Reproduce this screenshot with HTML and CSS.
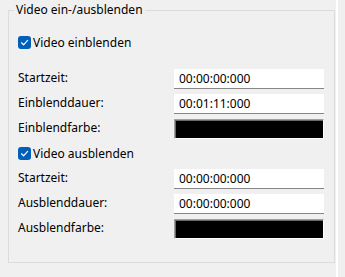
FILE: index.html
```html
<!DOCTYPE html>
<html lang="de">
<head>
    <meta charset="UTF-8">
    <title>Video ein-/ausblenden</title>
    <link rel="stylesheet" href="styles.css">
</head>
<body>
    <div class="pane">
        <fieldset class="group">
            <legend>Video ein-/ausblenden</legend>

            <!-- Einblenden -->
            <label class="toggle toggle-in">
                <span class="box">
                    <svg width="13" height="13" viewBox="0 0 13 13"><path d="M3.5 6.8 L5.6 8.8 L9.6 4.4" fill="none" stroke="#fff" stroke-width="1.2" stroke-linecap="round" stroke-linejoin="round"/></svg>
                </span>
                Video einblenden
            </label>
            <div class="fields fields-in">
                <span class="label">Startzeit:</span>
                <input class="time" type="text" value="00:00:00:000">
                <span class="label">Einblenddauer:</span>
                <input class="time" type="text" value="00:01:11:000">
                <span class="label">Einblendfarbe:</span>
                <span class="swatch"></span>
            </div>

            <!-- Ausblenden -->
            <label class="toggle toggle-out">
                <span class="box">
                    <svg width="13" height="13" viewBox="0 0 13 13"><path d="M3.5 6.8 L5.6 8.8 L9.6 4.4" fill="none" stroke="#fff" stroke-width="1.2" stroke-linecap="round" stroke-linejoin="round"/></svg>
                </span>
                Video ausblenden
            </label>
            <div class="fields fields-out">
                <span class="label">Startzeit:</span>
                <input class="time" type="text" value="00:00:00:000">
                <span class="label">Ausblenddauer:</span>
                <input class="time" type="text" value="00:00:00:000">
                <span class="label">Ausblendfarbe:</span>
                <span class="swatch"></span>
            </div>
        </fieldset>
    </div>
</body>
</html>
```

FILE: styles.css
```css
* {
    box-sizing: border-box;
}
body {
    margin: 0;
    background-color: #f0f0f0;
    color: #000;
    font-family: "Noto Sans", sans-serif;
    font-size: 12px;
}

.pane {
    width: 338px;
    height: 277px;
    padding: 2px 1px 0 8px;
    border-right: 2px solid #fff;
}

/* Group box */
.group {
    margin: 0;
    height: 261px;
    padding: 0 0 0 9px;
    border: 1px solid #dcdcdc;
    min-width: 0;
}
.group legend {
    margin-left: -4px;
    padding: 0 2px;
    line-height: 16px;
}

/* Checkboxes */
.toggle {
    display: flex;
    align-items: center;
    gap: 2px;
    height: 13px;
}
.toggle-in {
    margin-top: 18px;
}
.toggle-out {
    margin-top: 8px;
}
.box {
    width: 13px;
    height: 13px;
    border-radius: 3px;
    background-color: #005fb8;
    display: flex;
}

/* Label / value rows */
.fields {
    display: grid;
    grid-template-columns: 156px 150px;
    grid-auto-rows: 20px;
    row-gap: 5px;
}
.fields-in {
    margin-top: 20px;
}
.fields-out {
    margin-top: 9px;
}
.label {
    line-height: 14px;
    margin-top: 2px;
}
.time {
    width: 150px;
    height: 20px;
    margin: 0;
    padding: 0 5px;
    border: none;
    border-bottom: 1px solid #868686;
    background-color: #fff;
    font-family: inherit;
    font-size: 12px;
    color: #000;
    outline: none;
}
.swatch {
    height: 20px;
    background-color: #000;
    border: 1px solid;
    border-color: #a0a0a0 #fff #fff #a0a0a0;
    box-shadow: inset 1px 1px 0 #696969;
}
```
